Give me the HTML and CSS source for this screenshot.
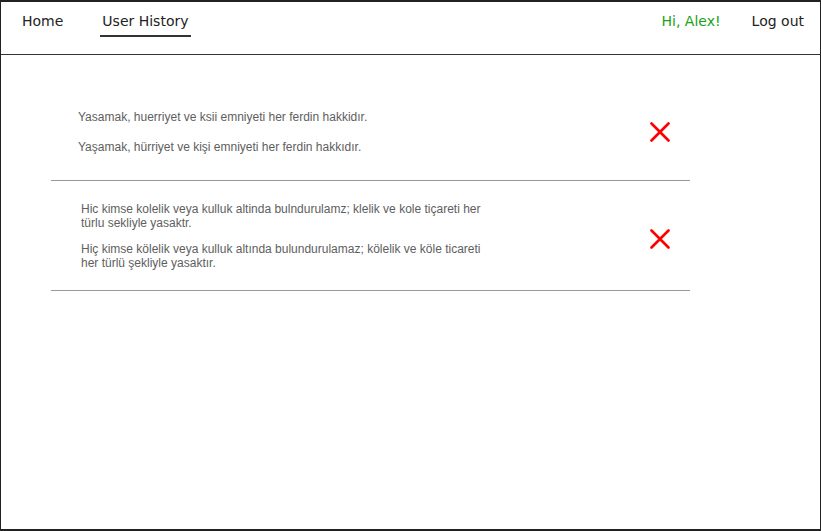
FILE: index.html
```html
<!DOCTYPE html>
<html lang="tr">
<head>
<meta charset="utf-8">
<title>User History</title>
<link rel="stylesheet" href="styles.css">
</head>
<body>
<div class="frame">
  <header class="topbar">
    <nav class="nav">
      <a class="nav-item">Home</a>
      <a class="nav-item active">User History</a>
    </nav>
    <div class="user">
      <span class="greet">Hi, Alex!</span>
      <a class="logout">Log out</a>
    </div>
  </header>
  <main class="main">
    <div class="list">
      <div class="row row-first">
        <div class="texts">
          <p>Yasamak, huerriyet ve ksii emniyeti her ferdin hakkidır.</p>
          <p>Yaşamak, hürriyet ve kişi emniyeti her ferdin hakkıdır.</p>
        </div>
        <svg class="del" width="20" height="20" viewBox="0 0 20 20"><path d="M1.5 1.5 L18.5 18.5 M18.5 1.5 L1.5 18.5" stroke="#f00" stroke-width="2.6" stroke-linecap="round"/></svg>
      </div>
      <div class="row row-second">
        <div class="texts">
          <p>Hic kimse kolelik veya kulluk altinda bulndurulamz; klelik ve kole tiçareti her türlu sekliyle yasaktr.</p>
          <p>Hiç kimse kölelik veya kulluk altında bulundurulamaz; kölelik ve köle ticareti her türlü şekliyle yasaktır.</p>
        </div>
        <svg class="del" width="20" height="20" viewBox="0 0 20 20"><path d="M1.5 1.5 L18.5 18.5 M18.5 1.5 L1.5 18.5" stroke="#f00" stroke-width="2.6" stroke-linecap="round"/></svg>
      </div>
    </div>
  </main>
</div>
</body>
</html>
```
FILE: styles.css
```css
* { box-sizing: border-box; }
html, body { margin: 0; padding: 0; background: #fff; }
.frame {
  width: 821px;
  height: 531px;
  border: 1px solid #222;
  border-top-width: 2px;
  border-bottom-width: 2px;
  display: flex;
  flex-direction: column;
  overflow: hidden;
}
.topbar {
  height: 53px;
  border-bottom: 1px solid #333;
  display: flex;
  justify-content: space-between;
  align-items: flex-start;
  padding: 11px 16px 0 19px;
  font-family: "DejaVu Sans", Verdana, sans-serif;
  font-size: 14px;
  line-height: 17px;
  color: #222;
}
.nav { display: flex; gap: 35px; }
.nav-item {
  padding: 0 2px 5px;
  border-bottom: 2px solid transparent;
}
.nav-item.active { border-bottom-color: #333; }
.user { display: flex; gap: 31px; }
.greet { color: #1ba21b; }
.main { flex: 1; padding: 34px 0 0 50px; }
.list { width: 639px; }
.row {
  display: flex;
  align-items: center;
  justify-content: space-between;
  border-bottom: 1px solid #999;
  padding-right: 20px;
}
.row-first { padding-top: 21px; padding-bottom: 26px; padding-left: 27px; }
.row-second { padding-top: 21px; padding-bottom: 20px; padding-left: 30px; }
.texts {
  width: 412px;
  font-family: "Liberation Sans", Arial, sans-serif;
  font-size: 12px;
  line-height: 14px;
  color: #5e5e5e;
  display: flex;
  flex-direction: column;
  gap: 12px;
}
.row-first .texts { gap: 16px; }
.texts p { margin: 0; }
.del { display: block; }
.row-second .del { margin-top: 6px; }
```
